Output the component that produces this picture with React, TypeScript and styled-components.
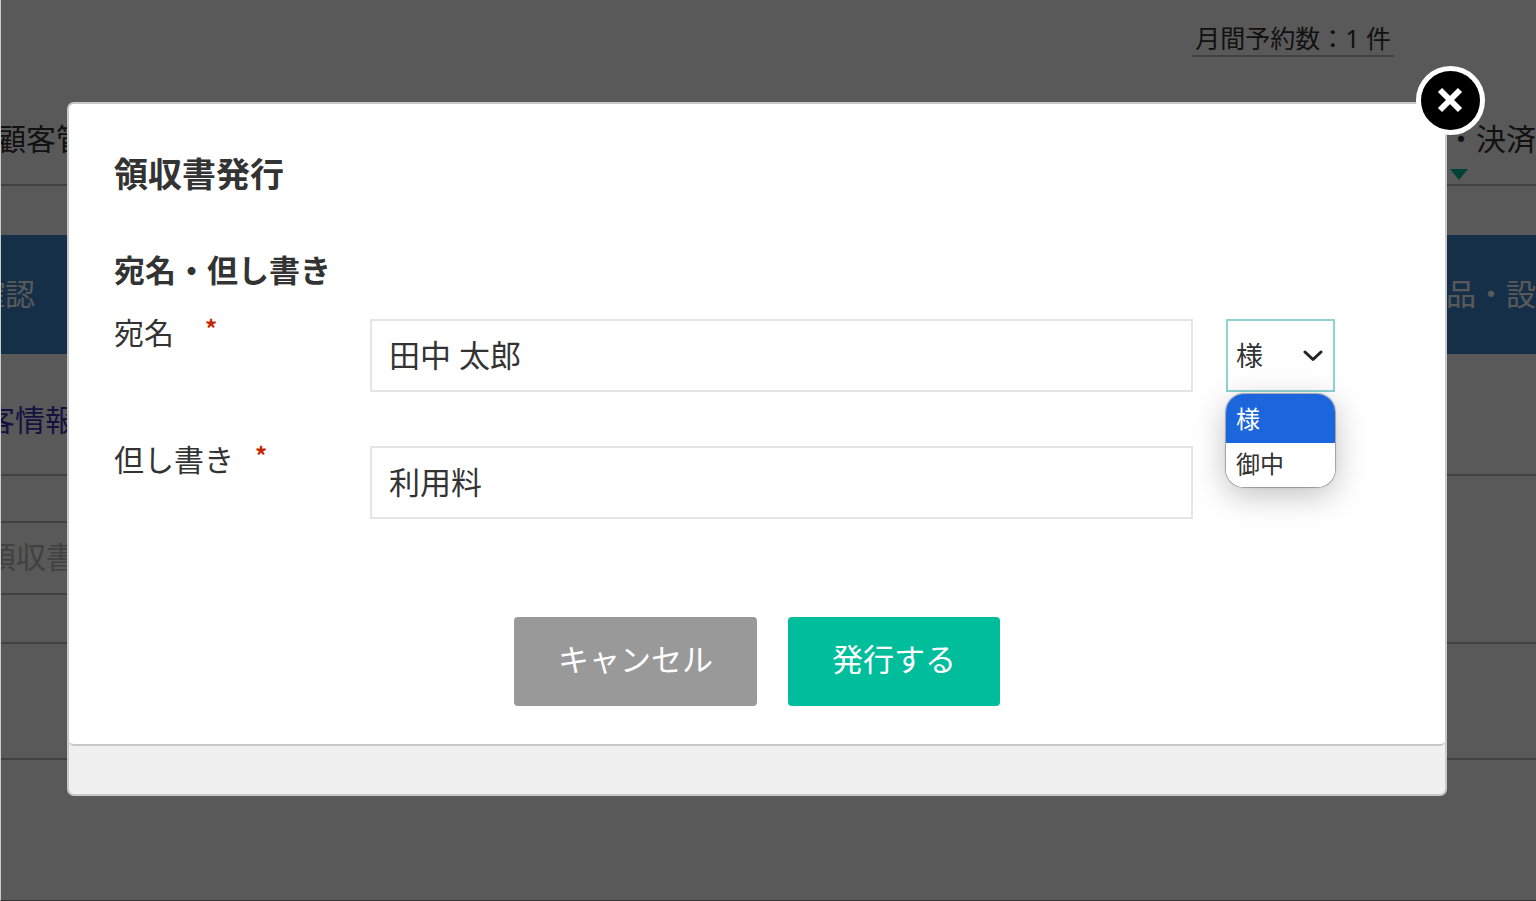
import React from "react";
import styled, { createGlobalStyle } from "styled-components";

const GlobalStyle = createGlobalStyle`
  *, *::before, *::after { box-sizing: border-box; }
  body {
    margin: 0;
    overflow: hidden;
    color: #333;
    background: #fff;
    font-family: "Noto Sans", "Noto Sans CJK JP", sans-serif;
    font-size: 30px;
    line-height: 44px;
  }
  h1, h2, p, ul { margin: 0; padding: 0; }
  button, input, select { font: inherit; color: inherit; }
`;

const Page = styled.div`
  min-height: 100vh;
  overflow: hidden;
  white-space: nowrap;
`;

const TopBar = styled.header`
  display: flex;
  justify-content: flex-end;
  height: 96px;
  padding: 22px 142px 0 0;
`;

const MonthlyCount = styled.p`
  align-self: flex-start;
  padding: 0 3px;
  border-bottom: 2px solid #bbb;
  font-size: 25px;
  line-height: 33px;
`;

const Strip = styled.nav`
  display: flex;
  align-items: center;
  justify-content: space-between;
`;

const MainNav = styled(Strip)`
  height: 90px;
  margin-bottom: 49px;
  padding-bottom: 2px;
  border-bottom: 2px solid #bbb;
`;

const SubNav = styled(Strip)`
  height: 119px;
  padding-bottom: 2px;
  color: #fff;
  background: #4088d0;
`;

const NavLink = styled.a<{ $scrolled?: number }>`
  margin-left: ${({ $scrolled = 0 }) => -$scrolled}px;
  color: inherit;
  text-decoration: none;
`;

const CurrentLink = styled(NavLink)`
  position: relative;
  &::after {
    content: "";
    position: absolute;
    top: 52px;
    left: 4px;
    border: 9px solid transparent;
    border-top: 11px solid #00bd9c;
    border-bottom: 0;
  }
`;

const Line = styled.div<{ $height: number }>`
  display: flex;
  align-items: center;
  height: ${({ $height }) => $height}px;
  border-bottom: 2px solid #bbb;
`;

const CustomerLink = styled(NavLink)`
  padding-top: 12px;
  color: #3a35b5;
`;

const ReceiptBox = styled.div`
  width: 50%;
  height: 74px;
  margin-bottom: 2px;
  padding: 12px 0;
  border: solid #bbb;
  border-width: 2px 0;
  color: #bbb;
`;

const ReceiptText = styled.p`
  margin-left: -14px;
`;

const Overlay = styled.div`
  position: fixed;
  inset: 0;
  padding: 102px 89px 0 66px;
  border-left: 1px solid #ccc;
  border-bottom: 1px solid #333;
  background: rgba(0, 0, 0, 0.65);
  background-clip: padding-box;
`;

const Dialog = styled.section`
  position: relative;
  padding-bottom: 48px;
  border: 2px solid #c8c8c8;
  border-radius: 7px;
  background: #f0f0f0;
`;

const DialogBody = styled.form`
  padding: 45px 45px 38px;
  border-bottom: 2px solid #c8c8c8;
  border-radius: 5px;
  background: #fff;
`;

const Title = styled.h1`
  font-size: 34px;
  line-height: 50px;
`;

const Subtitle = styled.h2`
  margin: 48px 0 26px;
  font-size: 31px;
  line-height: 46px;
`;

const Fields = styled.div`
  display: grid;
  gap: 54px;
  padding-right: 65px;
`;

const Field = styled.div`
  display: grid;
  grid-template-columns: 223px 1fr 109px;
  column-gap: 33px;
`;

const Label = styled.label`
  line-height: 28px;
`;

const Required = styled.span<{ $gap: number }>`
  margin-left: ${({ $gap }) => $gap}px;
  color: #c82400;
  font-family: "Noto Sans CJK JP", sans-serif;
  font-size: 24px;
  font-weight: 700;
  line-height: 0;
  vertical-align: 6px;
`;

const TextInput = styled.input`
  width: 100%;
  height: 73px;
  padding: 0 17px 5px;
  border: 2px solid #e5e5e5;
  border-radius: 0;
  outline: none;
  background: #fff;
  font-size: 31px;
`;

const SelectWrap = styled.div`
  position: relative;
`;

const HonorificSelect = styled.select`
  display: block;
  width: 100%;
  height: 73px;
  padding: 0 8px;
  appearance: none;
  border: 2px solid #8fd3d3;
  border-radius: 0;
  outline: none;
  background: #fff;
  font-size: 27px;
`;

const Chevron = styled.svg`
  position: absolute;
  top: 31px;
  right: 12px;
  pointer-events: none;
`;

const Options = styled.ul`
  position: absolute;
  top: 75px;
  left: 0;
  width: 109px;
  overflow: hidden;
  list-style: none;
  border-radius: 18px;
  background: #fff;
  box-shadow: 0 0 1px 1px rgba(0, 0, 0, 0.3), 0 8px 32px rgba(0, 0, 0, 0.25);
  font-size: 24px;
`;

const Option = styled.li<{ $active?: boolean }>`
  padding: ${({ $active }) => ($active ? "3px 10px 2px" : "0 10px 2px")};
  line-height: ${({ $active }) => ($active ? 44 : 42)}px;
  color: ${({ $active }) => ($active ? "#fff" : "#333")};
  background: ${({ $active }) => ($active ? "#1b66dc" : "#fff")};
`;

const Actions = styled.div`
  display: flex;
  justify-content: center;
  gap: 31px;
  margin-top: 98px;
`;

const ActionButton = styled.button<{ $primary?: boolean }>`
  height: 89px;
  padding: 0 44px 5px;
  border: 0;
  border-radius: 4px;
  color: #fff;
  background: ${({ $primary }) => ($primary ? "#00bd9c" : "#999")};
  font-size: 31px;
  cursor: pointer;
`;

const CloseButton = styled.button`
  position: absolute;
  top: -38px;
  right: -40px;
  display: grid;
  place-items: center;
  width: 69px;
  height: 69px;
  padding: 0;
  border: 5px solid #fff;
  border-radius: 50%;
  color: #fff;
  background: #000;
  cursor: pointer;
`;

export default function App() {
  return (
    <>
      <GlobalStyle />
      <Page>
        <TopBar>
          <MonthlyCount>月間予約数：1 件</MonthlyCount>
        </TopBar>
        <MainNav>
          <NavLink href="#customers" $scrolled={4}>顧客管</NavLink>
          <CurrentLink href="#payments">・決済</CurrentLink>
        </MainNav>
        <SubNav>
          <NavLink href="#confirm" $scrolled={25}>確認</NavLink>
          <NavLink href="#equipment">品・設</NavLink>
        </SubNav>
        <Line $height={122}>
          <CustomerLink href="#customer" $scrolled={15}>客情報</CustomerLink>
        </Line>
        <Line $height={168}>
          <ReceiptBox>
            <ReceiptText>領収書</ReceiptText>
          </ReceiptBox>
        </Line>
        <Line $height={116} />
      </Page>
      <Overlay>
        <Dialog role="dialog" aria-modal="true" aria-labelledby="dialog-title">
          <DialogBody onSubmit={(e) => e.preventDefault()}>
            <Title id="dialog-title">領収書発行</Title>
            <Subtitle>宛名・但し書き</Subtitle>
            <Fields>
              <Field>
                <Label htmlFor="addressee">
                  宛名<Required $gap={31}>*</Required>
                </Label>
                <TextInput id="addressee" defaultValue="田中 太郎" required />
                <SelectWrap>
                  <HonorificSelect aria-label="敬称" defaultValue="様">
                    <option>様</option>
                    <option>御中</option>
                  </HonorificSelect>
                  <Chevron width="20" height="12" viewBox="0 0 20 12" fill="none" stroke="#222" strokeWidth="3" strokeLinecap="round" strokeLinejoin="round">
                    <path d="M2 2l8 7.500 8-7.500" />
                  </Chevron>
                  <Options role="listbox" aria-label="敬称">
                    <Option role="option" aria-selected="true" $active>様</Option>
                    <Option role="option" aria-selected="false">御中</Option>
                  </Options>
                </SelectWrap>
              </Field>
              <Field>
                <Label htmlFor="description">
                  但し書き<Required $gap={21}>*</Required>
                </Label>
                <TextInput id="description" defaultValue="利用料" required />
              </Field>
            </Fields>
            <Actions>
              <ActionButton type="button">キャンセル</ActionButton>
              <ActionButton type="submit" $primary>発行する</ActionButton>
            </Actions>
          </DialogBody>
          <CloseButton type="button" aria-label="閉じる">
            <svg width="29" height="29" viewBox="0 0 29 29" stroke="currentColor" strokeWidth="6">
              <path d="M4 4l20 20M24 4l-20 20" />
            </svg>
          </CloseButton>
        </Dialog>
      </Overlay>
    </>
  );
}
